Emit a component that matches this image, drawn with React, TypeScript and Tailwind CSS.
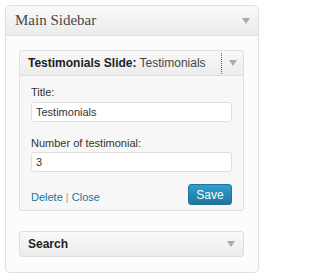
import React from "react";

const Arrow: React.FC = () => (
  <svg width="8" height="6" viewBox="0 0 8 6" className="block">
    <path d="M0 0 L8 0 L4 6 Z" fill="#aaaaaa" />
  </svg>
);

const App: React.FC = () => {
  return (
    <div
      className="w-[264px] h-[279px] bg-white pt-[5px] pl-[5px]"
      style={{ fontFamily: '"Liberation Sans", Arial, sans-serif' }}
    >
      {/* Sidebar panel */}
      <div className="w-[254px] h-[268px] border border-[#dfdfdf] rounded-[4px] bg-[#fcfcfc] flex flex-col overflow-hidden">
        <div className="h-[30px] shrink-0 flex items-center justify-between pl-[9px] pr-[8px] bg-gradient-to-b from-[#f9f9f9] to-[#ececec] border-b border-[#dfdfdf]">
          <span
            className="text-[15px] text-[#464646] leading-none"
            style={{ fontFamily: '"Liberation Serif", Georgia, serif' }}
          >
            Main Sidebar
          </span>
          <Arrow />
        </div>

        <div className="flex flex-col pt-[14px] pl-[13px]">
          {/* Testimonials widget */}
          <div className="w-[225px] h-[161px] border border-[#dfdfdf] rounded-[3px] bg-[#f7f7f7] flex flex-col">
            <div className="h-[25px] shrink-0 flex items-center border-b border-[#dfdfdf] bg-gradient-to-b from-[#f9f9f9] to-[#ececec] rounded-t-[3px]">
              <div className="flex-1 pl-[8px] text-[12px] leading-none whitespace-nowrap">
                <span className="font-bold text-[#222]">Testimonials Slide:</span>{" "}
                <span className="text-[#464646]">Testimonials</span>
              </div>
              <div className="w-[22px] h-[21px] border-l border-dotted border-[#21759b] flex items-center justify-center">
                <Arrow />
              </div>
            </div>

            <div className="flex flex-col px-[11px] pt-[9px]">
              <label className="text-[11px] leading-[14px] text-[#333]">Title:</label>
              <div className="mt-[3px] h-[20px] border border-[#dfdfdf] rounded-[3px] bg-white flex items-center pl-[4px] text-[11px] text-[#333]">
                Testimonials
              </div>
              <label className="mt-[14px] text-[11px] leading-[14px] text-[#333]">
                Number of testimonial:
              </label>
              <div className="mt-[2px] h-[20px] border border-[#dfdfdf] rounded-[3px] bg-white flex items-center pl-[4px] text-[11px] text-[#333]">
                3
              </div>
              <div className="mt-[12px] flex items-center justify-between">
                <div className="text-[11px] text-[#21759b] pt-[5px]">
                  Delete <span className="text-[#c8a062]">|</span> Close
                </div>
                <button className="w-[44px] h-[21px] rounded-[3px] border border-[#21759b] bg-gradient-to-b from-[#2e9fd2] to-[#21759b] text-white text-[12px] leading-none flex items-center justify-center">
                  Save
                </button>
              </div>
            </div>
          </div>

          {/* Search widget */}
          <div className="mt-[20px] w-[225px] h-[26px] border border-[#dfdfdf] rounded-[3px] bg-gradient-to-b from-[#f9f9f9] to-[#ececec] flex items-center justify-between pl-[8px] pr-[8px]">
            <span className="font-bold text-[12px] text-[#222] leading-none">Search</span>
            <Arrow />
          </div>
        </div>
      </div>
    </div>
  );
};

export default App;
